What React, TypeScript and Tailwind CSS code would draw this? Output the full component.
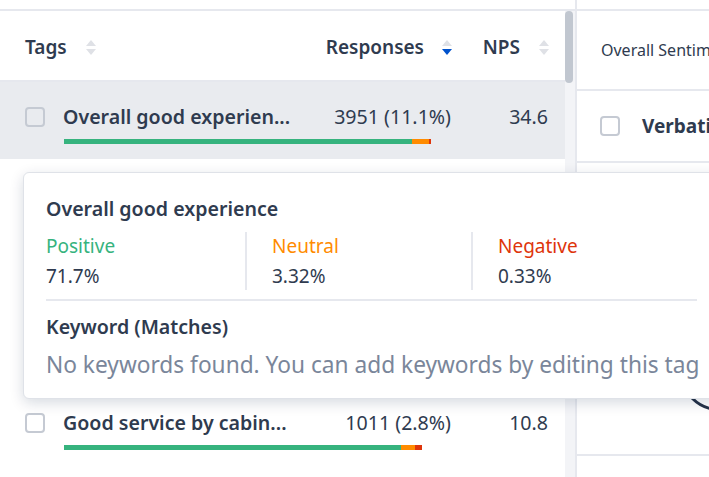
import React from "react";

const DARK = "text-[#2f3b4f]";

function SortIcon({ active }: { active?: "down" | "up" }) {
  return (
    <svg width="10" height="15" viewBox="0 0 10 15" className="shrink-0">
      <polygon points="0,6 5,0 10,6" fill={active === "up" ? "#0052cc" : "#dfe1e6"} />
      <polygon points="0,9 10,9 5,15" fill={active === "down" ? "#0052cc" : "#dfe1e6"} />
    </svg>
  );
}

function Checkbox() {
  return <div className="w-[20px] h-[20px] shrink-0 rounded-[4px] border-2 border-[#c5cad3]" />;
}

type Row = {
  name: string;
  resp: string;
  nps: string;
  g: number;
  o: number;
  r: number;
  active?: boolean;
};

const rows: Row[] = [
  { name: "Overall good experien...", resp: "3951 (11.1%)", nps: "34.6", g: 348, o: 17, r: 2, active: true },
  { name: "Comfortable seats and ...", resp: "2130 (6.0%)", nps: "21.4", g: 330, o: 12, r: 4 },
  { name: "Friendly staff on board", resp: "1642 (4.6%)", nps: "18.2", g: 320, o: 14, r: 6 },
  { name: "On-time departure", resp: "1204 (3.4%)", nps: "12.9", g: 310, o: 12, r: 5 },
  { name: "Good service by cabin...", resp: "1011 (2.8%)", nps: "10.8", g: 337, o: 14, r: 7 },
];

export default function App() {
  return (
    <div
      className="relative w-[709px] h-[477px] overflow-hidden bg-white"
      style={{ fontFamily: '"Noto Sans", "Open Sans", sans-serif' }}
    >
      <div className="flex h-full">
        {/* Left panel */}
        <div className="w-[565px] shrink-0 flex flex-col">
          <div className="h-[9px] shrink-0" />
          <div className="h-[2px] shrink-0 bg-[#e6e8ee]" />
          <div className={`h-[71px] shrink-0 flex items-center pt-[3px] pl-[25px] pr-[16px] border-b-2 border-[#e6e8ee] ${DARK}`}>
            <div className="flex-1 flex items-center gap-[19px] text-[19px] font-semibold">
              <span>Tags</span>
              <SortIcon />
            </div>
            <div className="w-[150px] flex items-center justify-end gap-[18px] text-[19px] font-semibold">
              <span>Responses</span>
              <SortIcon active="down" />
            </div>
            <div className="w-[97px] flex items-center justify-end gap-[19px] text-[19px] font-semibold">
              <span>NPS</span>
              <SortIcon />
            </div>
          </div>
          {rows.map((row, i) => (
            <div
              key={i}
              className={`h-[76.5px] shrink-0 flex flex-col pl-[25px] pr-[17px] pt-[23px] ${row.active ? "bg-[#e9ebef]" : "bg-white"}`}
            >
              <div className={`flex items-center h-[24px] ${DARK}`}>
                <Checkbox />
                <div className="flex-1 ml-[18px] text-[19.6px] font-semibold whitespace-nowrap">{row.name}</div>
                <div className="w-[150px] text-right text-[19.6px] whitespace-nowrap">{row.resp}</div>
                <div className="w-[97px] text-right text-[19.6px]">{row.nps}</div>
              </div>
              <div className="flex ml-[39px] mt-[10px] h-[5px]">
                <div className="bg-[#36b37e]" style={{ width: row.g }} />
                <div className="bg-[#ff8b00]" style={{ width: row.o }} />
                <div className="bg-[#de350b]" style={{ width: row.r }} />
              </div>
            </div>
          ))}
        </div>

        {/* Scrollbar */}
        <div className="w-[10px] shrink-0 flex flex-col">
          <div className="h-[9px] shrink-0 bg-white" />
          <div className="h-[2px] shrink-0 bg-[#e6e8ee]" />
          <div className="flex-1 bg-[#f3f4f7]">
            <div className="w-[8px] h-[72px] rounded-full bg-[#c1c7d0]" />
          </div>
        </div>

        {/* Divider */}
        <div className="w-[2px] shrink-0 bg-[#e6e8ee]" />

        {/* Right panel */}
        <div className="flex-1 min-w-0 flex flex-col overflow-hidden">
          <div className="h-[9px] shrink-0" />
          <div className="h-[2px] shrink-0 bg-[#e6e8ee]" />
          <div className={`h-[80px] shrink-0 flex items-center pl-[24px] border-b-2 border-[#e6e8ee] text-[16px] whitespace-nowrap ${DARK}`}>
            Overall Sentiment
          </div>
          <div className={`h-[72px] shrink-0 flex items-center pl-[23px] border-b-2 border-[#e6e8ee] text-[19px] font-bold whitespace-nowrap ${DARK}`}>
            <Checkbox />
            <span className="ml-[22px]">Verbatim</span>
          </div>
          <div className="h-[293px] shrink-0 border-b-2 border-[#e6e8ee] overflow-hidden">
            <div className="ml-[103px] mt-[170px] w-[78px] h-[78px] rounded-full border-[3px] border-[#253247]" />
          </div>
        </div>
      </div>

      {/* Popover */}
      <div className="absolute left-[23px] top-[172px] w-[697px] h-[227px] rounded-[6px] border border-[#dfe2e8] bg-white shadow-[0_4px_14px_rgba(9,30,66,0.16)] pl-[22px] pr-[22px] pt-[24px]">
        <div className={`text-[19.6px] leading-[24px] font-semibold ${DARK}`}>Overall good experience</div>
        <div className="flex mt-[11px] text-[19px] leading-[28px]">
          <div className="flex-1">
            <div className="text-[#36b37e]">Positive</div>
            <div className={`mt-[2px] ${DARK}`}>71.7%</div>
          </div>
          <div className="flex-1 border-l-2 border-[#e6e8ee] pl-[25px]">
            <div className="text-[#ff8b00]">Neutral</div>
            <div className={`mt-[2px] ${DARK}`}>3.32%</div>
          </div>
          <div className="flex-1 border-l-2 border-[#e6e8ee] pl-[25px]">
            <div className="text-[#de350b]">Negative</div>
            <div className={`mt-[2px] ${DARK}`}>0.33%</div>
          </div>
        </div>
        <div className="h-[2px] bg-[#e6e8ee] mt-[9px]" />
        <div className={`mt-[14px] text-[19.6px] leading-[24px] font-semibold ${DARK}`}>Keyword (Matches)</div>
        <div className="mt-[12px] text-[22.7px] leading-[28px] text-[#7a869a] whitespace-nowrap">
          No keywords found. You can add keywords by editing this tag
        </div>
      </div>
    </div>
  );
}
